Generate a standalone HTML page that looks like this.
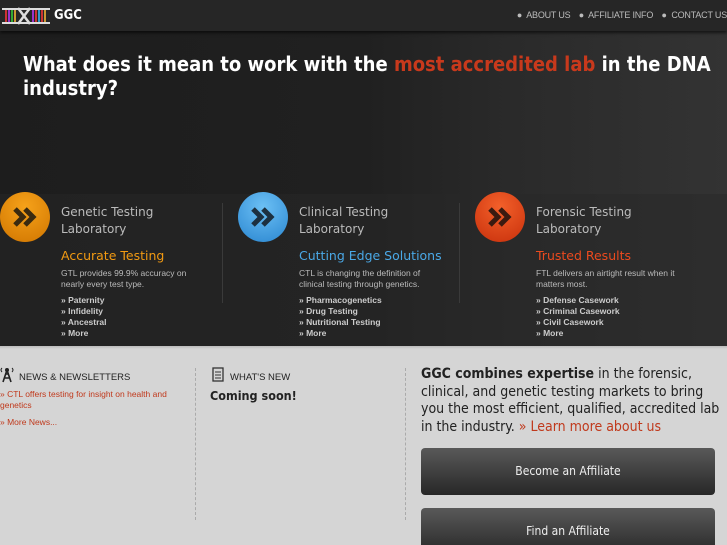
<!DOCTYPE html>
<html><head><style>
*{margin:0;padding:0;box-sizing:border-box}
html,body{width:727px;height:545px;overflow:hidden}
body{background:#d5d5d5;font-family:"Liberation Sans",sans-serif;position:relative}
.hdr{position:absolute;left:0;top:0;width:727px;height:31px;background:#262626;box-shadow:0 2px 3px rgba(0,0,0,.6);z-index:3}
.nav{position:absolute;right:0;top:10px;font-size:9px;color:#bbb;letter-spacing:-.2px}
.nav span{margin-left:6px}
.hero{position:absolute;left:0;top:31px;width:727px;height:315px;background:linear-gradient(90deg,#1d1d1d 0%,#202020 50%,#2a2a2a 70%,#333 100%)}
.band{position:absolute;left:0;top:163px;width:727px;height:152px;background:rgba(40,40,40,.5)}
h1{position:absolute;left:23px;top:52px;font-family:"DejaVu Sans Condensed","DejaVu Sans",sans-serif;font-stretch:condensed;font-weight:bold;font-size:20px;line-height:24px;color:#fff;width:700px;z-index:2}
h1 em{font-style:normal;color:#c8391c}
.col{position:absolute;top:190px;width:230px;color:#bbb}
.circ{position:absolute;left:0;top:2px;width:50px;height:50px;border-radius:50%}
.circ svg{position:absolute;left:13px;top:15px}
.t{position:absolute;left:61px;top:14px;font-family:"DejaVu Sans",sans-serif;font-size:12px;line-height:17px;color:#bbb;width:160px}
.s{position:absolute;left:61px;top:58px;font-family:"DejaVu Sans",sans-serif;font-size:12.5px;font-weight:500}
.d{position:absolute;left:61px;top:78px;font-size:8.5px;line-height:11px;width:140px;color:#bbb}
.l{position:absolute;left:61px;top:105px;font-size:8.5px;line-height:11px;font-weight:bold;color:#ccc}
.vl{position:absolute;top:203px;width:1px;height:100px;background:#3a3a3a}
.sh{position:absolute;font-size:9.5px;color:#222;top:372px}
.dash{position:absolute;top:368px;height:152px;border-left:1px dashed #aaa}
.red{color:#c0391c}
.btn{position:absolute;left:421px;width:294px;height:47px;border-radius:4px;background:linear-gradient(#595959,#272727);color:#eee;text-align:center;font-family:"DejaVu Sans Condensed","DejaVu Sans",sans-serif;font-size:12px;line-height:46px}
</style></head><body>
<div class="hdr">
<svg width="50" height="20" style="position:absolute;left:2px;top:6px" viewBox="0 0 50 20">
<rect x="0" y="2" width="48" height="2" fill="#ddd"/><rect x="0" y="16" width="48" height="2" fill="#ddd"/>
<g stroke-width="2"><line x1="4" y1="4" x2="4" y2="16" stroke="#c33"/><line x1="7" y1="4" x2="7" y2="16" stroke="#93c"/><line x1="10" y1="4" x2="10" y2="16" stroke="#3a3"/><line x1="13" y1="4" x2="13" y2="16" stroke="#c93"/><line x1="31" y1="4" x2="31" y2="16" stroke="#93c"/><line x1="34" y1="4" x2="34" y2="16" stroke="#c33"/><line x1="37" y1="4" x2="37" y2="16" stroke="#39c"/><line x1="40" y1="4" x2="40" y2="16" stroke="#c33"/><line x1="43" y1="4" x2="43" y2="16" stroke="#c93"/></g>
<path d="M16 2 L28 18 M16 18 L28 2" stroke="#ddd" stroke-width="2.5" fill="none"/></svg>
<div style="position:absolute;left:54px;top:8px;color:#fff;font-family:'DejaVu Sans Condensed','DejaVu Sans',sans-serif;font-weight:bold;font-size:13px">GGC</div>
<div class="nav"><span>●&nbsp; ABOUT US</span> <span>●&nbsp; AFFILIATE INFO</span> <span>●&nbsp; CONTACT US</span></div>
</div>
<div class="hero"><div class="band"></div></div>
<h1>What does it mean to work with the <em>most accredited lab</em> in the DNA industry?</h1>
<div class="vl" style="left:222px"></div><div class="vl" style="left:459px"></div>

<div class="col" style="left:0">
<div class="circ" style="background:radial-gradient(circle at 50% 30%,#f6a21a,#d07500)"><svg width="26" height="20"><path d="M2 2 L10 10 L2 18 M12 2 L20 10 L12 18" stroke="#3a2a10" stroke-width="5" fill="none"/></svg></div>
<div class="t">Genetic Testing<br>Laboratory</div>
<div class="s" style="color:#f29a12">Accurate Testing</div>
<div class="d">GTL provides 99.9% accuracy on nearly every test type.</div>
<div class="l">» Paternity<br>» Infidelity<br>» Ancestral<br>» More</div>
</div>
<div class="col" style="left:238px">
<div class="circ" style="background:radial-gradient(circle at 50% 30%,#6cc0f5,#2a86d0)"><svg width="26" height="20"><path d="M2 2 L10 10 L2 18 M12 2 L20 10 L12 18" stroke="#1d3040" stroke-width="5" fill="none"/></svg></div>
<div class="t">Clinical Testing<br>Laboratory</div>
<div class="s" style="color:#4aa8e6">Cutting Edge Solutions</div>
<div class="d">CTL is changing the definition of clinical testing through genetics.</div>
<div class="l">» Pharmacogenetics<br>» Drug Testing<br>» Nutritional Testing<br>» More</div>
</div>
<div class="col" style="left:475px">
<div class="circ" style="background:radial-gradient(circle at 50% 30%,#f3602a,#c8300c)"><svg width="26" height="20"><path d="M2 2 L10 10 L2 18 M12 2 L20 10 L12 18" stroke="#3a1a10" stroke-width="5" fill="none"/></svg></div>
<div class="t">Forensic Testing<br>Laboratory</div>
<div class="s" style="color:#ec4a1e">Trusted Results</div>
<div class="d">FTL delivers an airtight result when it matters most.</div>
<div class="l">» Defense Casework<br>» Criminal Casework<br>» Civil Casework<br>» More</div>
</div>

<div style="position:absolute;left:0;top:346px;width:727px;height:3px;background:linear-gradient(#bbb,#d5d5d5)"></div>
<svg width="14" height="16" style="position:absolute;left:0;top:367px"><path d="M7 3 L3 15 M7 3 L11 15 M4 11 H10 M5 7 H9" stroke="#222" stroke-width="1.6" fill="none"/><circle cx="7" cy="3" r="2" fill="#222"/><path d="M2 1 Q0 3 2 5 M12 1 Q14 3 12 5" stroke="#222" fill="none"/></svg>
<div class="sh" style="left:19px">NEWS &amp; NEWSLETTERS</div>
<div class="red" style="position:absolute;left:0;top:389px;font-size:8.5px;line-height:11px;width:170px">» CTL offers testing for insight on health and genetics</div>
<div class="red" style="position:absolute;left:0;top:417px;font-size:8.5px">» More News...</div>
<div class="dash" style="left:195px"></div>
<svg width="14" height="16" style="position:absolute;left:211px;top:367px"><rect x="2" y="1" width="10" height="13" fill="none" stroke="#333" stroke-width="1.3"/><path d="M4 5H10M4 8H10M4 11H10" stroke="#333"/></svg>
<div class="sh" style="left:230px">WHAT'S NEW</div>
<div style="position:absolute;left:210px;top:388px;font-family:'DejaVu Sans Condensed','DejaVu Sans',sans-serif;font-weight:bold;font-size:12.5px;color:#222">Coming soon!</div>
<div class="dash" style="left:405px"></div>
<div style="position:absolute;left:421px;top:366px;width:306px;white-space:nowrap;font-family:'DejaVu Sans Condensed','DejaVu Sans',sans-serif;font-size:14px;line-height:17.5px;color:#222"><b>GGC combines expertise</b> in the forensic,<br>clinical, and genetic testing markets to bring<br>you the most efficient, qualified, accredited lab<br>in the industry. <span class="red">» Learn more about us</span></div>
<div class="btn" style="top:448px">Become an Affiliate</div>
<div class="btn" style="top:508px">Find an Affiliate</div>
</body></html>
